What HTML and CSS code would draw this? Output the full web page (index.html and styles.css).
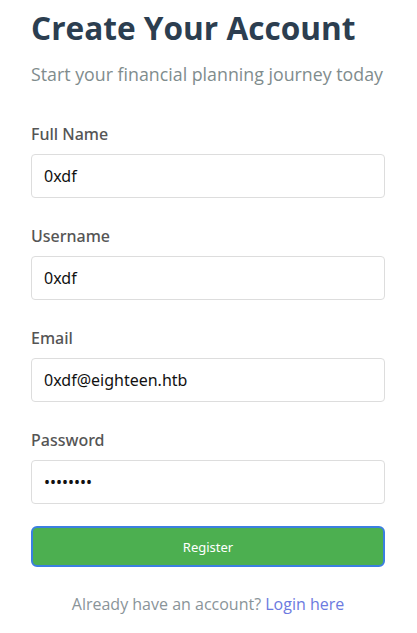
FILE: index.html
```html
<!DOCTYPE html>
<html>
<head>
<meta charset="utf-8">
<link rel="stylesheet" href="styles.css">
</head>
<body>
<div class="page">
  <h1 class="title">Create Your Account</h1>
  <p class="subtitle">Start your financial planning journey today</p>
  <form class="form">
    <div class="group">
      <label class="label">Full Name</label>
      <input class="input" type="text" value="0xdf">
    </div>
    <div class="group">
      <label class="label">Username</label>
      <input class="input" type="text" value="0xdf">
    </div>
    <div class="group">
      <label class="label">Email</label>
      <input class="input" type="text" value="0xdf@eighteen.htb">
    </div>
    <div class="group">
      <label class="label">Password</label>
      <input class="input" type="password" value="password">
    </div>
    <button class="btn" type="button">Register</button>
  </form>
  <p class="footer">Already have an account? <a class="link" href="#">Login here</a></p>
</div>
</body>
</html>
```

FILE: styles.css
```css
html, body {
  margin: 0;
  padding: 0;
  background: #ffffff;
}
body {
  font-family: "Open Sans", "Noto Sans", sans-serif;
}
.page {
  width: 354px;
  margin-left: 31px;
  padding-top: 6px;
}
.title {
  margin: 0;
  font-size: 31.6px;
  font-weight: 700;
  line-height: 43px;
  color: #2c3e50;
}
.subtitle {
  margin: 13px 0 0;
  font-size: 17.8px;
  line-height: 24px;
  color: #7f8c8d;
}
.form {
  margin-top: 36px;
}
.group {
  margin-bottom: 26px;
}
.label {
  display: block;
  font-family: "Noto Sans", "Open Sans", sans-serif;
  font-size: 16px;
  line-height: 24px;
  font-weight: 500;
  color: #555555;
  margin-bottom: 8px;
}
.input {
  display: block;
  box-sizing: border-box;
  width: 100%;
  height: 44px;
  padding: 0 12px;
  border: 1px solid #dddddd;
  border-radius: 4px;
  font-family: "Noto Sans", sans-serif;
  font-size: 16px;
  color: #111111;
  background: #fff;
  outline: none;
}
.btn {
  display: block;
  box-sizing: border-box;
  width: 100%;
  height: 41px;
  margin-top: -4px;
  background: #4caf50;
  border: 2px solid #3b7fe0;
  border-radius: 6px;
  color: #ffffff;
  font-family: "Noto Sans", sans-serif;
  font-size: 13px;
}
.footer {
  margin: 25px 0 0;
  text-align: center;
  font-size: 16px;
  line-height: 24px;
  color: #8a9499;
}
.link {
  color: #6c7ae0;
  text-decoration: none;
}
```
